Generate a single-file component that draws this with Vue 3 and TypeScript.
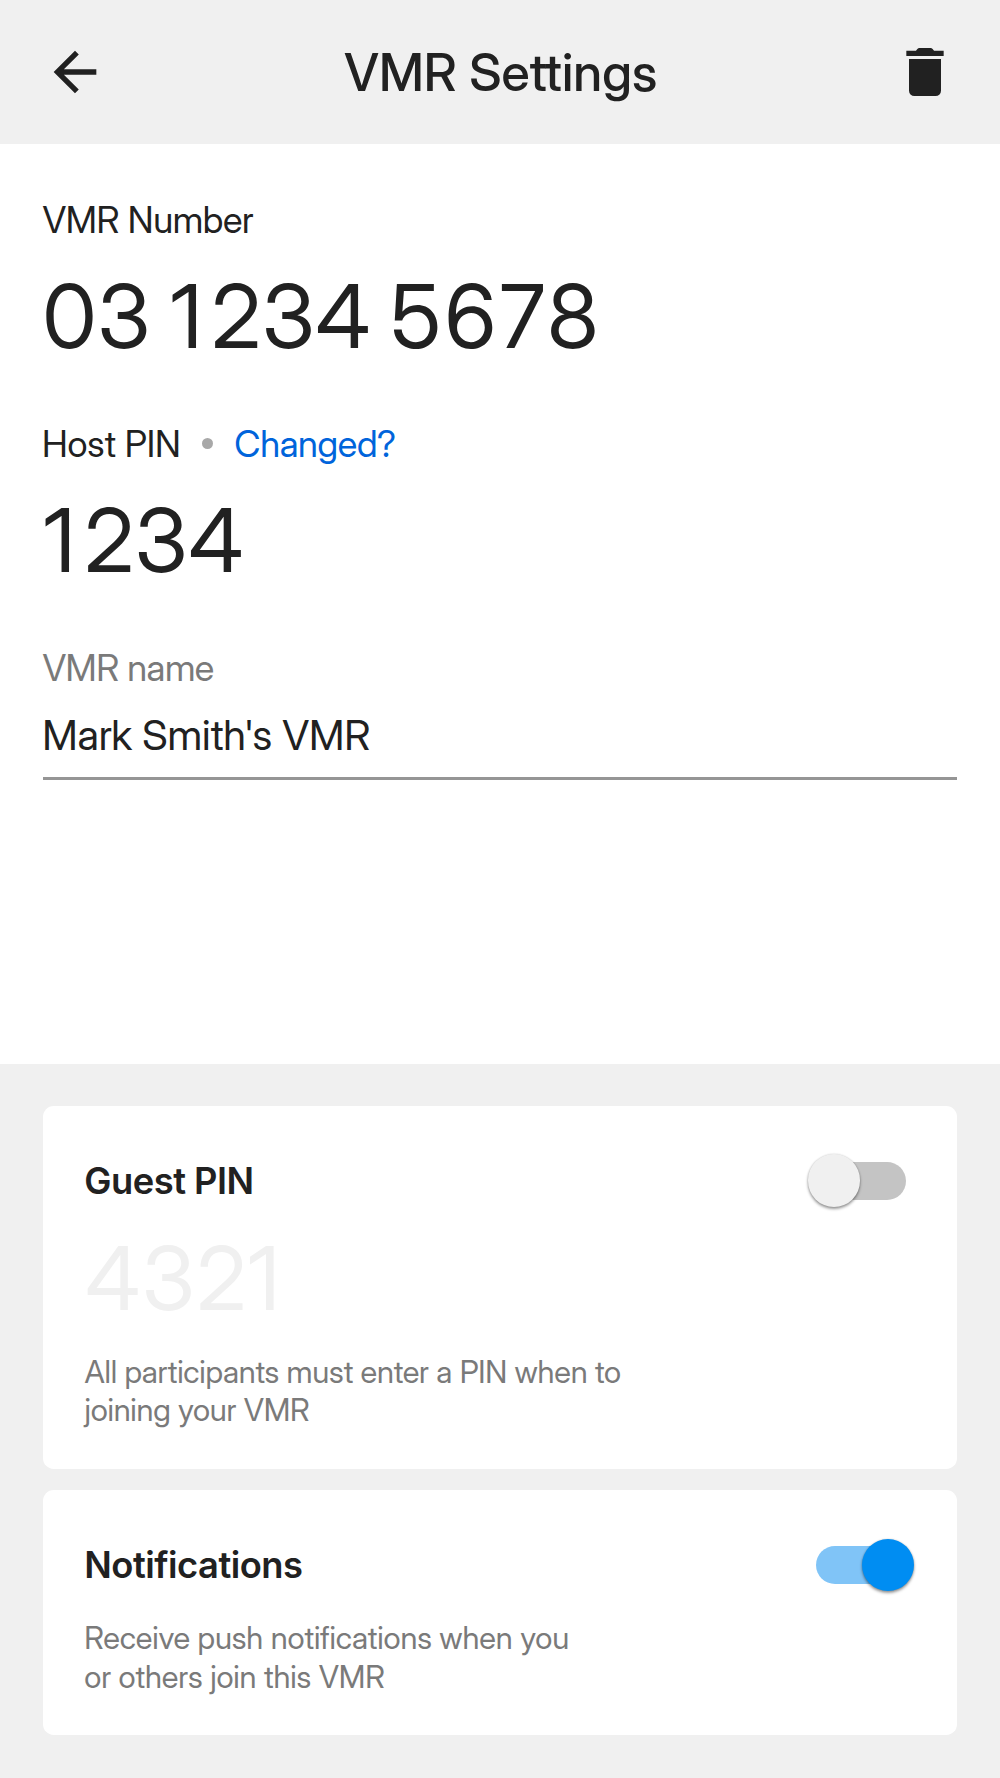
<script setup lang="ts">
import { ref } from 'vue'

const vmrName = ref("Mark Smith's VMR")
const guestPinEnabled = ref(false)
const notificationsEnabled = ref(true)
</script>

<template>
  <div class="screen">
    <header class="bar">
      <button class="icon-button" aria-label="Back">
        <svg viewBox="0 0 24 24"><path d="M20 11H7.83l5.59-5.59L12 4l-8 8 8 8 1.41-1.41L7.83 13H20z" /></svg>
      </button>
      <h1 class="title">VMR Settings</h1>
      <button class="icon-button" aria-label="Delete">
        <svg viewBox="0 0 24 24">
          <path d="M5 4h3.6l.55-.65Q9.45 3 9.9 3h4.2q.45 0 .75.35l.55.65H19v2H5z" />
          <path d="M6 7.1h12V19a2 2 0 0 1-2 2H8a2 2 0 0 1-2-2z" />
        </svg>
      </button>
    </header>

    <main class="details">
      <div class="label label-number">VMR Number</div>
      <div class="digits number"><span class="area">03</span> <span class="one">1</span>234 <span class="tail">5678</span></div>
      <div class="pin-row">
        <span class="label label-pin">Host PIN</span>
        <span class="dot"></span>
        <a class="label link">Changed?</a>
      </div>
      <div class="digits pin"><span class="one">1</span>234</div>
      <div class="label label-name">VMR name</div>
      <div class="field">{{ vmrName }}</div>
    </main>

    <section class="options">
      <article class="card">
        <div class="card-head">
          <h2>Guest PIN</h2>
          <button class="switch" :class="{ on: guestPinEnabled }" role="switch" :aria-checked="guestPinEnabled" @click="guestPinEnabled = !guestPinEnabled">
            <span class="knob"></span>
          </button>
        </div>
        <div class="digits guest-pin">4321</div>
        <p class="guest-text">All participants must enter a PIN when to<br />joining your VMR</p>
      </article>

      <article class="card">
        <div class="card-head">
          <h2>Notifications</h2>
          <button class="switch" :class="{ on: notificationsEnabled }" role="switch" :aria-checked="notificationsEnabled" @click="notificationsEnabled = !notificationsEnabled">
            <span class="knob"></span>
          </button>
        </div>
        <p class="notify-text">Receive push notifications when you<br />or others join this VMR</p>
      </article>
    </section>
  </div>
</template>

<style>
body {
  margin: 0;
}
</style>

<style scoped>
.screen {
  width: 1000px;
  height: 1778px;
  display: flex;
  flex-direction: column;
  overflow: hidden;
  background: #fff;
  color: #212121;
  font-family: "Inter Display", Inter, "Liberation Sans", sans-serif;
}
button {
  padding: 0;
  border: 0;
  background: none;
}
.bar {
  height: 144px;
  flex: none;
  box-sizing: border-box;
  padding: 0 42.7px;
  display: flex;
  align-items: center;
  justify-content: space-between;
  background: #f0f0f0;
}
.icon-button,
.icon-button svg {
  display: block;
  width: 64px;
  height: 64px;
  fill: #212121;
}
.title {
  margin: 0;
  padding-left: 1.6px;
  font-size: 51.6px;
  font-weight: 500;
  line-height: 64px;
  letter-spacing: 0.04px;
}
.details {
  height: 920px;
  flex: none;
  box-sizing: border-box;
  padding: 53.5px 43px 0;
}
.label {
  font-size: 36.3px;
  line-height: 44px;
  white-space: nowrap;
}
.label-number {
  margin-left: -0.6px;
  letter-spacing: -0.36px;
}
.digits {
  font-size: 88px;
  line-height: 100px;
  letter-spacing: 1.1px;
  white-space: nowrap;
}
.one {
  letter-spacing: 9px;
}
.number {
  margin: 24.5px 0 0 -0.5px;
  word-spacing: -3.7px;
}
.area {
  letter-spacing: 1px;
}
.tail {
  letter-spacing: 3.5px;
}
.pin-row {
  margin: 55.5px 0 0 -1px;
  display: flex;
  align-items: center;
}
.label-pin {
  width: 160.2px;
  letter-spacing: -0.18px;
}
.dot {
  width: 11px;
  height: 11px;
  margin-right: 21.1px;
  border-radius: 50%;
  background: #a8a8a8;
}
.link {
  color: #0064db;
  letter-spacing: -0.34px;
}
.pin {
  margin: 24.5px 0 0 0.5px;
}
.label-name {
  margin: 55.5px 0 0 -0.6px;
  color: #7a7a7a;
  letter-spacing: -0.5px;
}
.field {
  margin-top: 20px;
  padding-bottom: 17.5px;
  border-bottom: 3px solid #959595;
  text-indent: -0.8px;
  font-size: 41.3px;
  line-height: 50px;
  letter-spacing: -0.18px;
}
.options {
  flex: 1;
  padding: 42px 43px 0;
  display: flex;
  flex-direction: column;
  gap: 21.3px;
  background: #f0f0f0;
}
.card {
  box-sizing: border-box;
  height: 362.7px;
  padding: 48px 42px 0;
  border-radius: 10.7px;
  background: #fff;
}
.card + .card {
  height: 245px;
}
.card-head {
  height: 54px;
  display: flex;
  align-items: center;
  justify-content: space-between;
}
h2 {
  margin: 0 0 0 -0.7px;
  font-family: Inter, "Liberation Sans", sans-serif;
  font-size: 36.3px;
  font-weight: 600;
  line-height: 44px;
  letter-spacing: -0.5px;
}
.switch {
  width: 90.7px;
  height: 37.3px;
  margin-right: 8.6px;
  display: flex;
  align-items: center;
  border-radius: 19px;
  background: #c4c4c4;
}
.knob {
  flex: none;
  width: 52.6px;
  height: 52.6px;
  margin: -1px 0 0 -8px;
  border-radius: 50%;
  background: #f0f0f0;
  box-shadow: 0 2px 3px rgba(0, 0, 0, 0.4), 0 0 2px rgba(0, 0, 0, 0.16);
}
.switch.on {
  background: #80c4f7;
}
.switch.on .knob {
  margin: 0 0 0 46px;
  background: #008df2;
}
.guest-pin {
  margin: 20px 0 0 0.5px;
  color: #f0f0f0;
  letter-spacing: 2.06px;
}
p {
  font-size: 31px;
  line-height: 38.6px;
  color: #7a7a7a;
  white-space: nowrap;
}
.guest-text {
  margin: 24.6px 0 0 -0.4px;
  letter-spacing: -0.25px;
}
.notify-text {
  margin: 27.4px 0 0 -0.7px;
  letter-spacing: -0.15px;
}
</style>
